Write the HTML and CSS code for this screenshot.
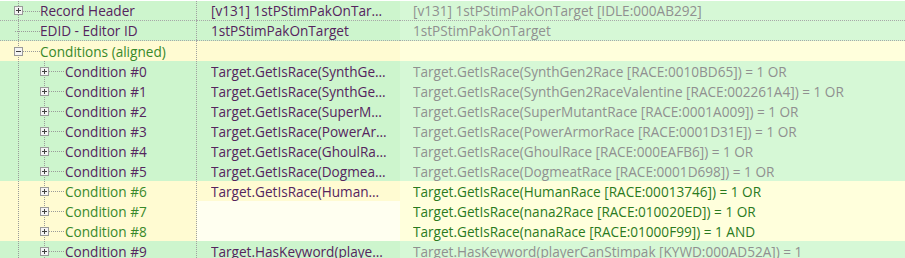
FILE: index.html
```html
<!DOCTYPE html>
<html>
<head>
    <link rel="stylesheet" href="styles.css">
    <title>Record View</title>
</head>
<body>
<div class="tree">
    <div class="row row--green row--ruled">
        <div class="cell cell--name">
            <span class="twig twig--first"><svg class="box" viewBox="0 0 9 9"><rect x="0.5" y="0.5" width="8" height="8" fill="#f4f4f4" stroke="#9a9a9a"/><path d="M2 4.5h5M4.5 2v5" stroke="#404040"/></svg></span>
            <span class="label label--purple">Record Header</span>
        </div>
        <div class="cell cell--mid"><span class="label label--purple">[v131] 1stPStimPakOnTarget [IDLE:000AB292]</span></div>
        <div class="cell cell--value"><span class="label label--gray">[v131] 1stPStimPakOnTarget [IDLE:000AB292]</span></div>
    </div>
    <div class="row row--green row--ruled">
        <div class="cell cell--name">
            <span class="twig twig--leaf"></span>
            <span class="label label--purple">EDID - Editor ID</span>
        </div>
        <div class="cell cell--mid"><span class="label label--purple">1stPStimPakOnTarget</span></div>
        <div class="cell cell--value"><span class="label label--gray">1stPStimPakOnTarget</span></div>
    </div>
    <div class="row row--yellow">
        <div class="cell cell--name">
            <span class="twig twig--open"><svg class="box" viewBox="0 0 9 9"><rect x="0.5" y="0.5" width="8" height="8" fill="#f4f4f4" stroke="#9a9a9a"/><path d="M2 4.5h5" stroke="#404040"/></svg></span>
            <span class="label label--green">Conditions (aligned)</span>
        </div>
        <div class="cell cell--mid"></div>
        <div class="cell cell--value"></div>
    </div>
    <div class="conditions"></div>
</div>

<script>
    (function conditionsView() {
        // short value, full value, highlighted
        let conditions = [
            ['Target.GetIsRace(SynthGen2Race [RACE:0010BD65]) = 1 OR', 'Target.GetIsRace(SynthGen2Race [RACE:0010BD65]) = 1 OR', false],
            ['Target.GetIsRace(SynthGen2RaceValentine [RACE:002261A4]) = 1 OR', 'Target.GetIsRace(SynthGen2RaceValentine [RACE:002261A4]) = 1 OR', false],
            ['Target.GetIsRace(SuperMutantRace [RACE:0001A009]) = 1 OR', 'Target.GetIsRace(SuperMutantRace [RACE:0001A009]) = 1 OR', false],
            ['Target.GetIsRace(PowerArmorRace [RACE:0001D31E]) = 1 OR', 'Target.GetIsRace(PowerArmorRace [RACE:0001D31E]) = 1 OR', false],
            ['Target.GetIsRace(GhoulRace [RACE:000EAFB6]) = 1 OR', 'Target.GetIsRace(GhoulRace [RACE:000EAFB6]) = 1 OR', false],
            ['Target.GetIsRace(DogmeatRace [RACE:0001D698]) = 1 OR', 'Target.GetIsRace(DogmeatRace [RACE:0001D698]) = 1 OR', false],
            ['Target.GetIsRace(HumanRace [RACE:00013746]) = 1 OR', 'Target.GetIsRace(HumanRace [RACE:00013746]) = 1 OR', true],
            ['', 'Target.GetIsRace(nana2Race [RACE:010020ED]) = 1 OR', true],
            ['', 'Target.GetIsRace(nanaRace [RACE:01000F99]) = 1 AND', true],
            ['Target.HasKeyword(playerCanStimpak [KYWD:000AD52A]) = 1', 'Target.HasKeyword(playerCanStimpak [KYWD:000AD52A]) = 1', false]
        ];

        let $list = document.querySelector('.conditions');
        let box = '<svg class="box" viewBox="0 0 9 9"><rect x="0.5" y="0.5" width="8" height="8" fill="#f4f4f4" stroke="#9a9a9a"/><path d="M2 4.5h5M4.5 2v5" stroke="#404040"/></svg>';

        conditions.forEach((c, i) => {
            let hl = c[2];
            let row = document.createElement('div');
            row.className = 'row ' + (hl ? 'row--yellow' : 'row--green');
            let color = hl ? 'label--green' : 'label--purple';
            let last = i === conditions.length - 1 ? ' twig--last' : '';
            let mid = c[0] ? '<span class="label label--purple">' + c[0] + '</span>' : '';
            row.innerHTML =
                '<div class="cell cell--name">' +
                    '<span class="twig twig--pass"></span>' +
                    '<span class="twig twig--child' + last + '">' + box + '</span>' +
                    '<span class="label ' + color + '">Condition #' + i + '</span>' +
                '</div>' +
                '<div class="cell cell--mid' + (c[0] ? '' : ' cell--empty') + '">' + mid + '</div>' +
                '<div class="cell cell--value"><span class="label ' + (hl ? 'label--dark' : 'label--gray') + '">' + c[1] + '</span></div>';
            $list.appendChild(row);
        });
    })();
</script>
</body>
</html>
```

FILE: styles.css
```css
*,
*::before,
*::after {
    box-sizing: border-box;
}

body {
    margin: 0;
    padding-top: 1px;
    background: #ffffff;
    font-family: 'Open Sans', sans-serif;
    font-size: 13.6px;
    overflow: hidden;
}

.row {
    display: grid;
    grid-template-columns: 197px 203px 1fr;
    height: 20px;
}

.cell {
    display: flex;
    align-items: center;
    height: 20px;
    overflow: hidden;
    white-space: nowrap;
}

.cell--name {
    padding-left: 14px;
    background-image: linear-gradient(to bottom, #a0a0a0 50%, transparent 50%);
    background-size: 1px 2px;
    background-repeat: repeat-y;
    background-position: right 0;
}

.cell--mid {
    padding-left: 14px;
    padding-right: 13px;
}

.cell--value {
    padding-left: 13px;
}

.row--green .cell--name,
.row--green .cell--mid {
    background-color: #cdf5cd;
}

.row--green .cell--value {
    background-color: #d6f8d6;
}

.row--yellow .cell--name,
.row--yellow .cell--mid {
    background-color: #fffbd2;
}

.row--yellow .cell--value {
    background-color: #ffffdc;
}

.row--yellow .cell--empty {
    background-color: #fffff0;
}

.row--ruled .cell {
    border-bottom: 1px dotted #a8a8a8;
}

.label {
    overflow: hidden;
    text-overflow: ellipsis;
    line-height: 20px;
    padding-top: 1px;
}

.label--purple {
    color: #55245e;
}

.label--green {
    color: #38892a;
}

.label--dark {
    color: #2a7a1e;
}

.label--gray {
    color: #909090;
}

/* tree guides */
.twig {
    flex: none;
    width: 26px;
    height: 20px;
    display: flex;
    align-items: center;
    background-image:
        linear-gradient(to right, #9a9a9a 50%, transparent 50%),
        linear-gradient(to bottom, #9a9a9a 50%, transparent 50%);
    background-size: 2px 1px, 1px 2px;
    background-repeat: repeat-x, repeat-y;
    background-position: 5px 10px, 4px 0;
}

.twig--first {
    background-position: 5px 10px, 4px 10px;
}

.twig--pass {
    background-image: linear-gradient(to bottom, #9a9a9a 50%, transparent 50%);
    background-size: 1px 2px;
    background-repeat: repeat-y;
    background-position: 4px 0;
}

.twig--child {
    width: 25px;
}

.box {
    width: 9px;
    height: 9px;
    display: block;
    flex: none;
    margin-right: 17px;
}

.twig--child .box {
    margin-right: 16px;
}
```
